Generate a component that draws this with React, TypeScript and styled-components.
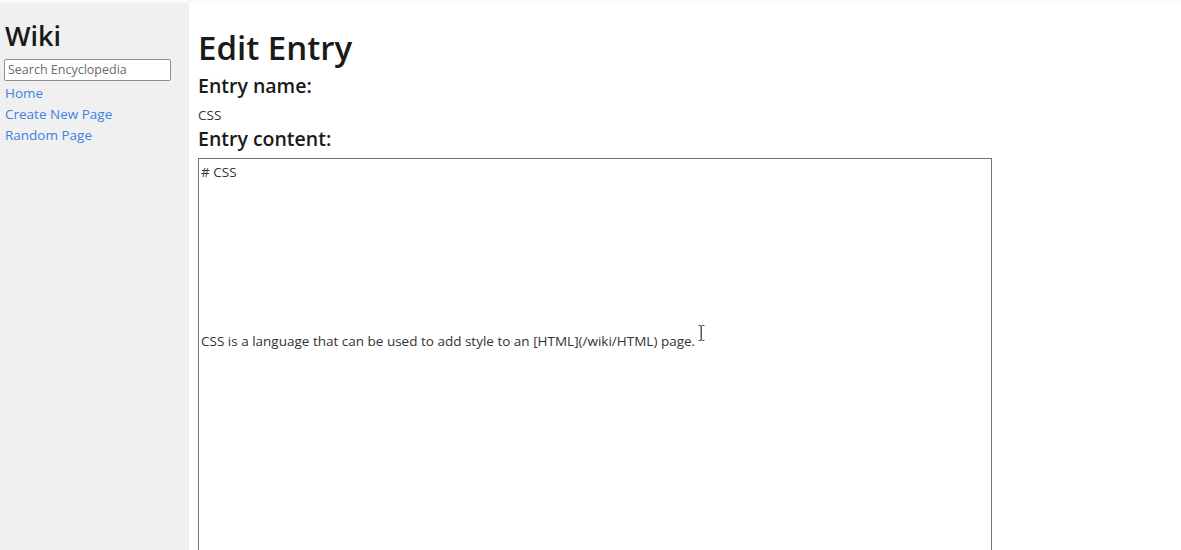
import styled, { createGlobalStyle } from "styled-components";

const GlobalStyle = createGlobalStyle`
  html, body {
    margin: 0;
    padding: 0;
    overflow: hidden;
    background: #ffffff;
  }
  body {
    font-family: "Open Sans", "Noto Sans", sans-serif;
    color: #212529;
  }
  * {
    box-sizing: border-box;
  }
`;

const entryText =
  "# CSS\n\n\n\n\n\n\n\n\n\nCSS is a language that can be used to add style to an [HTML](/wiki/HTML) page.";

const App = () => {
  return (
    <>
      <GlobalStyle />
      <Layout>
        <Sidebar>
          <Brand>Wiki</Brand>
          <SearchForm>
            <SearchInput type="text" placeholder="Search Encyclopedia" />
          </SearchForm>
          <NavLink href="#">Home</NavLink>
          <NavLink href="#">Create New Page</NavLink>
          <NavLink href="#">Random Page</NavLink>
        </Sidebar>
        <Main>
          <PageTitle>Edit Entry</PageTitle>
          <FieldLabel>Entry name:</FieldLabel>
          <EntryName>CSS</EntryName>
          <FieldLabel>Entry content:</FieldLabel>
          <EditorWrap>
            <Editor defaultValue={entryText} spellCheck={false} />
            <TextCursor width="7" height="16" viewBox="0 0 7 16">
              <path
                d="M0.5 0.5h2.5v15h-2.5M6.5 0.5h-2.5M6.5 15.5h-2.5M3.5 1v14"
                fill="none"
                stroke="#555"
                strokeWidth="1"
              />
            </TextCursor>
          </EditorWrap>
        </Main>
      </Layout>
    </>
  );
};

export default App;

const Layout = styled.div`
  display: flex;
  height: 100vh;
  border-top: 3px solid #fafafa;
`;

const Sidebar = styled.nav`
  width: 189px;
  flex-shrink: 0;
  background-color: #f0f0f0;
  padding: 15px 4px 0 4px;
  display: flex;
  flex-direction: column;
  align-items: flex-start;
`;

const Brand = styled.h2`
  margin: 0 0 0 1px;
  font-size: 27px;
  font-weight: 600;
  line-height: 36px;
  color: #1a1a1a;
`;

const SearchForm = styled.form`
  margin: 3px 0 2px 0;
`;

const SearchInput = styled.input`
  width: 167px;
  height: 22px;
  border: 1px solid #8f8f8f;
  border-radius: 2px;
  padding: 0 3px;
  font-family: "Open Sans", "Noto Sans", sans-serif;
  font-size: 12.5px;
  color: #333;
  background: #fff;
  &::placeholder {
    color: #6b6b6b;
  }
`;

const NavLink = styled.a`
  margin-left: 1px;
  font-size: 13.5px;
  line-height: 21px;
  color: #3f7fe6;
  text-decoration: none;
`;

const Main = styled.main`
  flex: 1;
  padding: 0 0 0 9px;
`;

const PageTitle = styled.h1`
  margin: 22px 0 2px 0;
  font-size: 33px;
  font-weight: 600;
  line-height: 46px;
  color: #1a1a1a;
`;

const FieldLabel = styled.h3`
  margin: 0;
  font-size: 19.5px;
  font-weight: 600;
  line-height: 26px;
  color: #1a1a1a;
`;

const EntryName = styled.div`
  margin-top: 5px;
  font-size: 13.5px;
  line-height: 22px;
  color: #333;
`;

const EditorWrap = styled.div`
  position: relative;
  margin-top: 6px;
  width: 794px;
`;

const Editor = styled.textarea`
  display: block;
  width: 794px;
  height: 520px;
  border: 1px solid #767676;
  padding: 5px 2px;
  resize: none;
  font-family: "Open Sans", "Noto Sans", sans-serif;
  font-size: 13.5px;
  line-height: 16.9px;
  color: #333;
  background: #fff;
  outline: none;
`;

const TextCursor = styled.svg`
  position: absolute;
  left: 500px;
  top: 167px;
  pointer-events: none;
`;
